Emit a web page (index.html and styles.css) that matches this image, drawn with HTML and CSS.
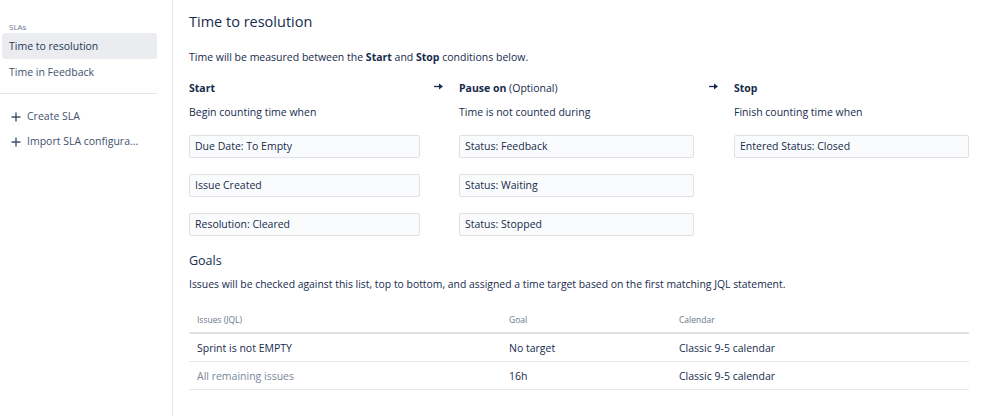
FILE: index.html
```html
<!DOCTYPE html>
<html>
<head>
<meta charset="utf-8">
<link rel="stylesheet" href="styles.css">
</head>
<body>
<div class="page">
  <aside class="sidebar">
    <div class="side-label">SLAs</div>
    <div class="side-item active">Time to resolution</div>
    <div class="side-item">Time in Feedback</div>
    <div class="side-sep"></div>
    <div class="side-action"><svg class="plus" width="10" height="10" viewBox="0 0 10 10"><path d="M5 0.5V9.5M0.5 5H9.5" stroke="#42526e" stroke-width="1.4"/></svg>Create SLA</div>
    <div class="side-action"><svg class="plus" width="10" height="10" viewBox="0 0 10 10"><path d="M5 0.5V9.5M0.5 5H9.5" stroke="#42526e" stroke-width="1.4"/></svg>Import SLA configura...</div>
  </aside>
  <main class="main">
    <h1 class="title">Time to resolution</h1>
    <p class="desc">Time will be measured between the <b>Start</b> and <b>Stop</b> conditions below.</p>
    <div class="conds">
      <div class="col">
        <div class="col-title"><b>Start</b></div>
        <div class="col-sub">Begin counting time when</div>
        <div class="field">Due Date: To Empty</div>
        <div class="field">Issue Created</div>
        <div class="field">Resolution: Cleared</div>
      </div>
      <div class="arrow"><svg width="9" height="7" viewBox="0 0 9 7"><path d="M0 3.5H6" stroke="#172b4d" stroke-width="1.3"/><path d="M5 0.5L9 3.5L5 6.5Z" fill="#172b4d"/></svg></div>
      <div class="col">
        <div class="col-title"><b>Pause on</b> (Optional)</div>
        <div class="col-sub">Time is not counted during</div>
        <div class="field">Status: Feedback</div>
        <div class="field">Status: Waiting</div>
        <div class="field">Status: Stopped</div>
      </div>
      <div class="arrow"><svg width="9" height="7" viewBox="0 0 9 7"><path d="M0 3.5H6" stroke="#172b4d" stroke-width="1.3"/><path d="M5 0.5L9 3.5L5 6.5Z" fill="#172b4d"/></svg></div>
      <div class="col">
        <div class="col-title"><b>Stop</b></div>
        <div class="col-sub">Finish counting time when</div>
        <div class="field">Entered Status: Closed</div>
      </div>
    </div>
    <h2 class="goals">Goals</h2>
    <p class="desc2">Issues will be checked against this list, top to bottom, and assigned a time target based on the first matching JQL statement.</p>
    <table class="tbl">
      <thead>
        <tr><th class="c1">Issues (JQL)</th><th class="c2">Goal</th><th class="c3">Calendar</th></tr>
      </thead>
      <tbody>
        <tr><td>Sprint is not EMPTY</td><td>No target</td><td>Classic 9-5 calendar</td></tr>
        <tr><td class="muted">All remaining issues</td><td>16h</td><td>Classic 9-5 calendar</td></tr>
      </tbody>
    </table>
  </main>
</div>
</body>
</html>
```
FILE: styles.css
```css
html, body {
  margin: 0;
  padding: 0;
  background: #ffffff;
}
body {
  font-family: "Open Sans", "Noto Sans", "Liberation Sans", sans-serif;
  color: #172b4d;
  font-size: 10.5px;
}
.page {
  display: flex;
  height: 416px;
}
.sidebar {
  width: 173px;
  border-right: 1px solid #e6e7ea;
  padding-top: 20px;
  box-sizing: border-box;
  flex-shrink: 0;
}
.side-label {
  font-size: 8px;
  color: #6b778c;
  padding-left: 9px;
  height: 13px;
  line-height: 13px;
}
.side-item {
  margin-left: 2px;
  width: 155px;
  height: 26px;
  line-height: 26px;
  padding-left: 7px;
  box-sizing: border-box;
  border-radius: 3px;
  color: #42526e;
}
.side-item.active {
  background: #ebecf0;
  color: #253858;
}
.side-sep {
  width: 157px;
  height: 1px;
  background: #e2e4e8;
  margin-top: 8px;
  margin-bottom: 10px;
}
.side-action {
  height: 25px;
  line-height: 25px;
  padding-left: 11px;
  color: #42526e;
  display: flex;
  align-items: center;
}
.plus {
  margin-right: 6px;
  flex-shrink: 0;
}
.main {
  padding-left: 16px;
  padding-top: 12px;
  flex: 1;
}
.title {
  font-size: 14.5px;
  font-weight: normal;
  margin: 0;
  height: 20px;
  line-height: 20px;
  color: #172b4d;
}
.desc {
  margin: 17px 0 0 0;
  height: 16px;
  line-height: 16px;
}
.conds {
  display: grid;
  grid-template-columns: 231px 39px 235px 40px 235px;
  margin-top: 15px;
}
.col-title {
  height: 16px;
  line-height: 16px;
}
.col-sub {
  margin-top: 8px;
  height: 16px;
  line-height: 16px;
}
.arrow {
  display: flex;
  justify-content: center;
  padding-top: 3px;
  height: 16px;
  box-sizing: border-box;
  padding-right: 2px;
}
.field {
  margin-top: 15px;
  height: 23px;
  line-height: 21px;
  border: 1px solid #dfe1e6;
  border-radius: 2px;
  background: #fafbfc;
  padding-left: 5px;
  box-sizing: border-box;
}
.field + .field {
  margin-top: 16px;
}
.goals {
  font-size: 12.5px;
  font-weight: normal;
  margin: 16px 0 0 0;
  height: 18px;
  line-height: 18px;
}
.desc2 {
  margin: 6px 0 0 0;
  height: 16px;
  line-height: 16px;
  font-size: 10.4px;
}
.tbl {
  margin-top: 15px;
  width: 780px;
  border-collapse: collapse;
}
.tbl th {
  font-size: 8.5px;
  font-weight: normal;
  color: #6b778c;
  text-align: left;
  height: 25px;
  padding: 0 0 0 8px;
  border-bottom: 2px solid #dfe1e6;
}
.tbl .c1 { width: 304px; }
.tbl .c2 { width: 162px; }
.tbl td {
  height: 27px;
  padding: 0 0 0 8px;
  border-bottom: 1px solid #e6e7ea;
}
.tbl td.muted {
  color: #7a869a;
}
```
